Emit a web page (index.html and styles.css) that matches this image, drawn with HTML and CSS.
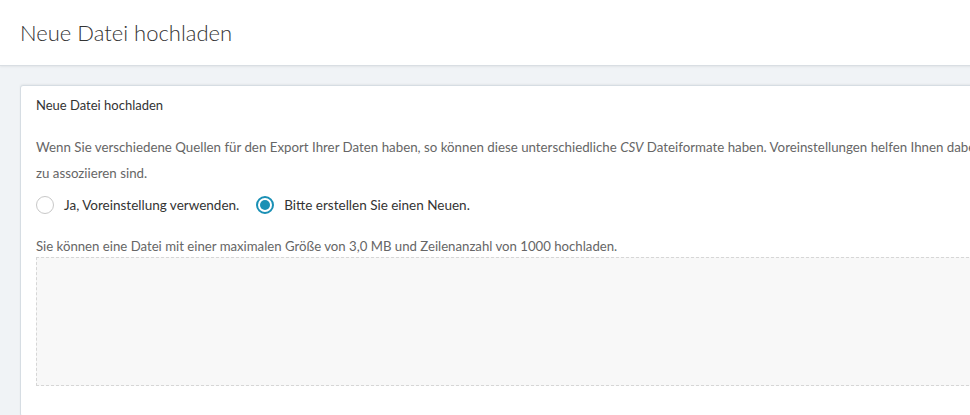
FILE: index.html
```html
<!DOCTYPE html>
<html lang="de">
<head>
    <meta charset="UTF-8">
    <title>Neue Datei hochladen</title>
    <link rel="stylesheet" href="styles.css">
</head>
<body>

    <!-- Page Header -->
    <header class="page-header">
        <h1>Neue Datei hochladen</h1>
    </header>

    <main class="content">
        <section class="card">
            <h2 class="card-title">Neue Datei hochladen</h2>

            <p class="intro"><span class="line">Wenn Sie verschiedene Quellen für den Export Ihrer Daten haben, so können diese unterschiedliche <em>CSV</em> Dateiformate haben. Voreinstellungen helfen Ihnen dabei, die Spalten Ihrer Datei den Feldern zuzuordnen, die mit Ihren Kontakten</span><br>zu assoziieren sind.</p>

            <div class="radio-row">
                <label class="radio">
                    <input type="radio" name="preset" value="use">
                    <span class="dot"></span>
                    Ja, Voreinstellung verwenden.
                </label>
                <label class="radio">
                    <input type="radio" name="preset" value="new" checked>
                    <span class="dot"></span>
                    Bitte erstellen Sie einen Neuen.
                </label>
            </div>

            <p class="hint">Sie können eine Datei mit einer maximalen Größe von 3,0 MB und Zeilenanzahl von 1000 hochladen.</p>
            <div class="dropzone"></div>
        </section>
    </main>

</body>
</html>
```

FILE: styles.css
```css
/* Page Styles */
html, body {
    overflow: hidden;
}

body {
    margin: 0;
    font-family: Lato, "Open Sans", sans-serif;
    background: #f0f3f6;
    color: #333;
    width: 1240px;
}

.page-header {
    background: #fff;
    height: 65px;
    border-bottom: 1px solid #d9dee3;
    box-shadow: 0 1px 2px rgba(0, 0, 0, 0.06);
    display: flex;
    align-items: center;
    padding: 0 20px;
}

.page-header h1 {
    margin: 0;
    font-size: 22px;
    font-weight: 300;
    color: #333;
}

.content {
    padding: 19px 20px 0;
}

.card {
    background: #fff;
    border: 1px solid #d6dde3;
    border-radius: 3px;
    box-shadow: 0 -1px 2px rgba(0, 0, 0, 0.05);
    padding: 10px 15px 30px;
}

.card-title {
    margin: 0;
    font-size: 13px;
    font-weight: 400;
    color: #333;
    line-height: 18px;
}

.intro {
    margin: 20px 0 0;
    font-size: 13.3px;
    line-height: 26px;
    color: #666;
}

.intro .line {
    white-space: nowrap;
}

.radio-row {
    display: flex;
    gap: 17px;
    margin-top: 10px;
}

.radio {
    display: flex;
    align-items: center;
    gap: 10px;
    font-size: 13.5px;
    color: #333;
    cursor: pointer;
}

.radio input {
    display: none;
}

.dot {
    width: 18px;
    height: 18px;
    box-sizing: border-box;
    border: 1px solid #c8c8c8;
    border-radius: 50%;
    background: #fff;
    display: flex;
    align-items: center;
    justify-content: center;
}

.radio input:checked + .dot {
    border: 2px solid #1a90b5;
}

.radio input:checked + .dot::after {
    content: "";
    width: 10px;
    height: 10px;
    border-radius: 50%;
    background: #1a90b5;
}

.hint {
    margin: 22px 0 0;
    font-size: 13.2px;
    line-height: 20px;
    color: #666;
}

.dropzone {
    margin-top: 1px;
    height: 127px;
    border: 1px dashed #d6d6d6;
    background: #f8f8f8;
}
```
